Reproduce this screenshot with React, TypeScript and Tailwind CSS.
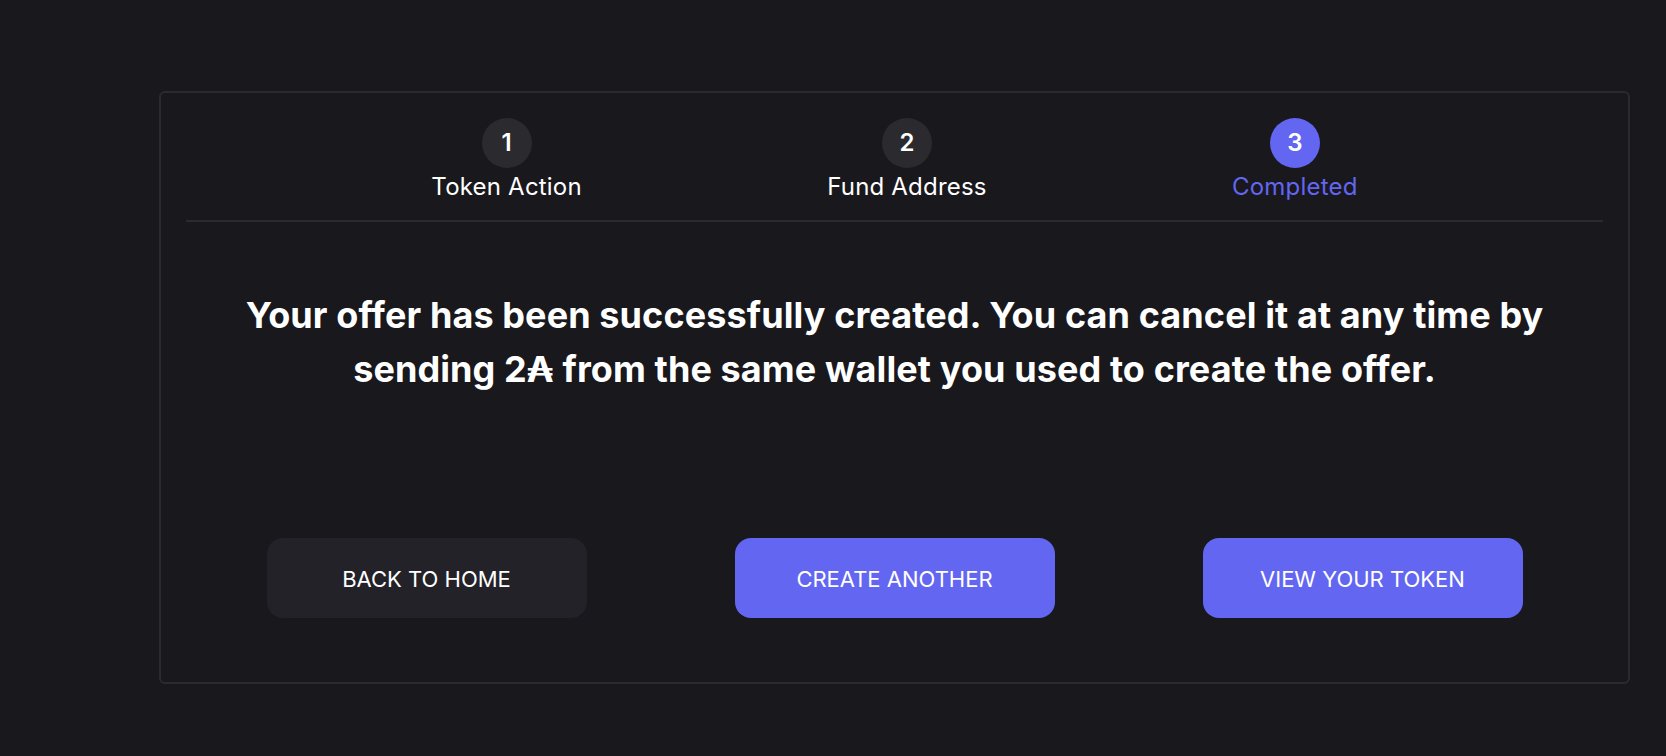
import React from "react";

const steps = [
  { n: 1, label: "Token Action", active: false },
  { n: 2, label: "Fund Address", active: false },
  { n: 3, label: "Completed", active: true },
];

export default function App() {
  return (
    <div
      className="min-h-screen w-full bg-[#19181d] pl-[159px] pr-[36px] pt-[91px] text-white"
      style={{ fontFamily: "Inter, 'Noto Sans', sans-serif" }}
    >
      <div className="rounded-md border-2 border-[#2b2a30] bg-[#19181d] px-[25px] pt-[25px] pb-[64px]">
        <div className="flex justify-evenly pb-[17px]">
          {steps.map((s) => (
            <div key={s.n} className="flex flex-col items-center gap-[3px]">
              <div
                className={
                  s.active
                    ? "flex h-[50px] w-[50px] items-center justify-center rounded-full bg-[#6366f1] text-[24px] font-semibold leading-none text-white"
                    : "flex h-[50px] w-[50px] items-center justify-center rounded-full bg-[#2a2a2f] text-[24px] font-semibold leading-none text-white"
                }
              >
                {s.n}
              </div>
              <div
                className={
                  s.active
                    ? "text-[24px] leading-[32px] tracking-[0.2px] text-[#6366f1]"
                    : "text-[24px] leading-[32px] tracking-[0.2px] text-white"
                }
              >
                {s.label}
              </div>
            </div>
          ))}
        </div>
        <div className="h-[2px] w-full bg-[#2a2a2f]" />
        <h1 className="mx-auto mt-[66px] max-w-[1340px] text-center text-[36px] font-bold leading-[54px] tracking-[0.1px] text-white">
          Your offer has been successfully created. You can cancel it at any time by sending 2₳ from the same wallet you used to create the offer.
        </h1>
        <div className="mt-[142px] flex justify-center gap-[148px]">
          <button className="flex h-[80px] w-[320px] items-center justify-center rounded-2xl bg-[#232228] pt-[3px] text-[22px] text-white">
            BACK TO HOME
          </button>
          <button className="flex h-[80px] w-[320px] items-center justify-center rounded-2xl bg-[#6366f1] pt-[3px] text-[22px] text-white">
            CREATE ANOTHER
          </button>
          <button className="flex h-[80px] w-[320px] items-center justify-center rounded-2xl bg-[#6366f1] pt-[3px] text-[22px] text-white">
            VIEW YOUR TOKEN
          </button>
        </div>
      </div>
    </div>
  );
}
